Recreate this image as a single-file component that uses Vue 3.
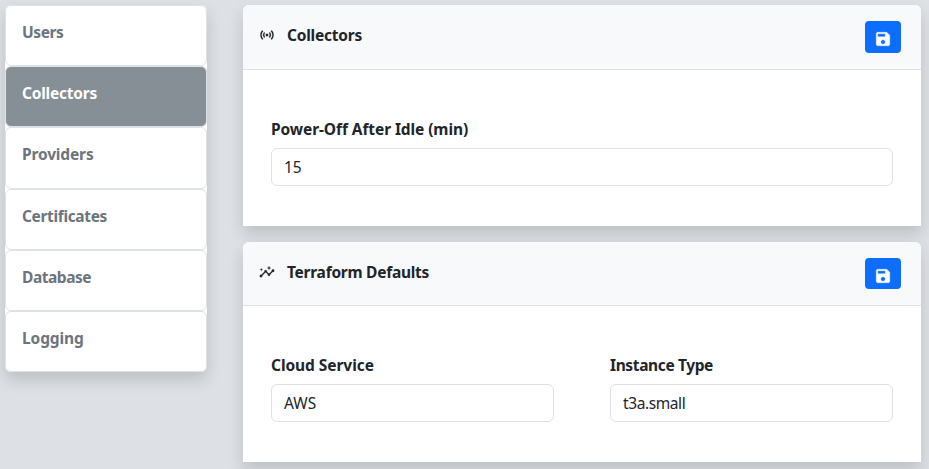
<script setup>
import { ref } from 'vue'

const active = ref('Collectors')
const sections = ['Users', 'Collectors', 'Providers', 'Certificates', 'Database', 'Logging']

const idle = ref('15')
const service = ref('AWS')
const instance = ref('t3a.small')
</script>

<template>
  <div class="page">
    <nav class="menu">
      <a
        v-for="name in sections"
        :key="name"
        class="item"
        :class="{ active: name === active }"
        @click="active = name"
      ><span :class="'t-' + name.toLowerCase()">{{ name }}</span></a>
    </nav>

    <main class="content">
      <section class="card">
        <header class="head">
          <svg class="icon" viewBox="0 0 24 24">
            <path d="M7.76,16.24C6.67,15.16,6,13.66,6,12s0.67-3.16,1.76-4.24l1.42,1.42C8.45,9.9,8,10.9,8,12c0,1.1,0.45,2.1,1.17,2.83L7.76,16.24z M16.24,16.24C17.33,15.16,18,13.66,18,12s-0.67-3.16-1.76-4.24l-1.42,1.42C15.55,9.9,16,10.9,16,12c0,1.1-0.45,2.1-1.17,2.83L16.24,16.24z M12,10c-1.1,0-2,0.9-2,2s0.9,2,2,2s2-0.9,2-2S13.1,10,12,10z M20,12c0,2.21-0.9,4.21-2.35,5.65l1.42,1.42C20.88,17.26,22,14.76,22,12s-1.12-5.26-2.93-7.07l-1.42,1.42C19.1,7.79,20,9.79,20,12z M6.35,6.35L4.93,4.93C3.12,6.74,2,9.24,2,12s1.12,5.26,2.93,7.07l1.42-1.42C4.9,16.21,4,14.21,4,12S4.9,7.79,6.35,6.35z" />
          </svg>
          <h2 class="title"><span class="t-collectors">Collectors</span></h2>
          <button class="save" aria-label="Save">
            <svg viewBox="0 0 24 24"><path d="M17 3H5c-1.11 0-2 .9-2 2v14c0 1.1.89 2 2 2h14c1.1 0 2-.9 2-2V7l-4-4zm-5 16c-1.66 0-3-1.34-3-3s1.34-3 3-3 3 1.34 3 3-1.34 3-3 3zm3-10H5V5h10v4z" /></svg>
          </button>
        </header>
        <div class="body">
          <label class="field">
            <span class="label t-idle">Power-Off After Idle (min)</span>
            <input v-model="idle" class="input" type="text" />
          </label>
        </div>
      </section>

      <section class="card">
        <header class="head compact">
          <svg class="icon" viewBox="0 0 24 24">
            <path d="M21,8c-1.45,0-2.26,1.44-1.93,2.51l-3.55,3.56c-0.3-0.09-0.74-0.09-1.04,0l-2.55-2.55C12.27,10.45,11.46,9,10,9c-1.45,0-2.27,1.44-1.93,2.52l-4.56,4.55C2.44,15.74,1,16.55,1,18c0,1.1,0.9,2,2,2c1.45,0,2.26-1.44,1.93-2.51l4.55-4.56c0.3,0.09,0.74,0.09,1.04,0l2.55,2.55C12.73,16.55,13.54,18,15,18c1.45,0,2.27-1.44,1.93-2.52l3.56-3.55C21.56,12.26,23,11.45,23,10C23,8.9,22.1,8,21,8z M15,9l0.94-2.07L18,6l-2.06-0.93L15,3l-0.92,2.07L12,6l2.08,0.93z M3.5,11L4,9l2-0.5L4,8L3.5,6L3,8L1,8.5L3,9z" />
          </svg>
          <h2 class="title"><span class="t-terraform">Terraform Defaults</span></h2>
          <button class="save" aria-label="Save">
            <svg viewBox="0 0 24 24"><path d="M17 3H5c-1.11 0-2 .9-2 2v14c0 1.1.89 2 2 2h14c1.1 0 2-.9 2-2V7l-4-4zm-5 16c-1.66 0-3-1.34-3-3s1.34-3 3-3 3 1.34 3 3-1.34 3-3 3zm3-10H5V5h10v4z" /></svg>
          </button>
        </header>
        <div class="body">
          <label class="field">
            <span class="label t-service">Cloud Service</span>
            <input v-model="service" class="input" type="text" />
          </label>
          <label class="field">
            <span class="label t-instance">Instance Type</span>
            <input v-model="instance" class="input t-small" type="text" />
          </label>
        </div>
      </section>
    </main>
  </div>
</template>

<style>
body {
  margin: 0;
  background: #dde1e6;
  overflow: hidden;
}
</style>

<style scoped>
.page {
  box-sizing: border-box;
  height: 469px;
  padding: 5px 8px 0 5px;
  display: flex;
  align-items: flex-start;
  gap: 36px;
  overflow: hidden;
  background: #dde1e6;
  color: #212529;
  font: 15.5px/24px 'Noto Sans', 'Open Sans', sans-serif;
}
.menu {
  width: 202px;
  flex: none;
  background: #fff;
  border-radius: 6px;
  box-shadow: 0 8px 16px rgba(0, 0, 0, 0.15);
}
.item {
  box-sizing: border-box;
  display: block;
  height: 61.2px;
  padding: 14px 16px;
  border: 1px solid #dee2e6;
  border-radius: 6px;
  background: #fff;
  color: #6c757d;
  font-weight: 700;
  cursor: pointer;
}
.item.active {
  background: #868e96;
  color: #fff;
}
.content {
  flex: 1;
  display: flex;
  flex-direction: column;
  gap: 16px;
}
.card {
  background: #fff;
  border-radius: 6px 6px 0 0;
  box-shadow: 0 8px 16px rgba(0, 0, 0, 0.15);
}
.head {
  box-sizing: border-box;
  height: 65px;
  padding: 16px 20px 0 16px;
  display: flex;
  align-items: flex-start;
  background: #f8f9fb;
  border-bottom: 1px solid #dee2e6;
  border-radius: 6px 6px 0 0;
}
.head.compact {
  height: 64px;
}
.icon {
  width: 16px;
  height: 16px;
  margin: 6px 12px 0 0;
  fill: currentColor;
  stroke: currentColor;
  stroke-width: 0.2;
}
.title {
  flex: 1;
  margin: 2px 0 0;
  font-size: inherit;
  line-height: 24px;
  font-weight: 700;
}
.save {
  width: 36px;
  height: 32px;
  padding: 4px 0 0;
  display: flex;
  align-items: center;
  justify-content: center;
  border: 0;
  border-radius: 4px;
  background: #0d6efd;
  color: #fff;
}
.compact .save {
  height: 31px;
}
.save svg {
  width: 18px;
  height: 18px;
  fill: currentColor;
  stroke: currentColor;
  stroke-width: 0.5;
}
.body {
  box-sizing: border-box;
  height: 156px;
  padding: 47px 28px 0;
  display: flex;
  gap: 56px;
}
.field {
  flex: 1;
  min-width: 0;
  display: flex;
  flex-direction: column;
  align-items: flex-start;
  gap: 7px;
}
.label {
  font-weight: 700;
}
.input {
  box-sizing: border-box;
  width: 100%;
  height: 38px;
  padding: 0 12px;
  border: 1px solid #dee2e6;
  border-radius: 6px;
  background: #fff;
  color: #212529;
  font: inherit;
  outline: none;
}
.t-users { letter-spacing: -0.4px; }
.t-collectors { letter-spacing: -0.22px; }
.t-providers { letter-spacing: -0.15px; }
.t-certificates { letter-spacing: -0.35px; }
.t-database { letter-spacing: -0.45px; }
.t-logging { letter-spacing: -0.1px; }
.t-idle { letter-spacing: -0.09px; }
.t-terraform { letter-spacing: -0.26px; }
.t-service { letter-spacing: -0.06px; }
.t-instance { letter-spacing: -0.37px; }
.t-small { letter-spacing: -0.4px; }
</style>
